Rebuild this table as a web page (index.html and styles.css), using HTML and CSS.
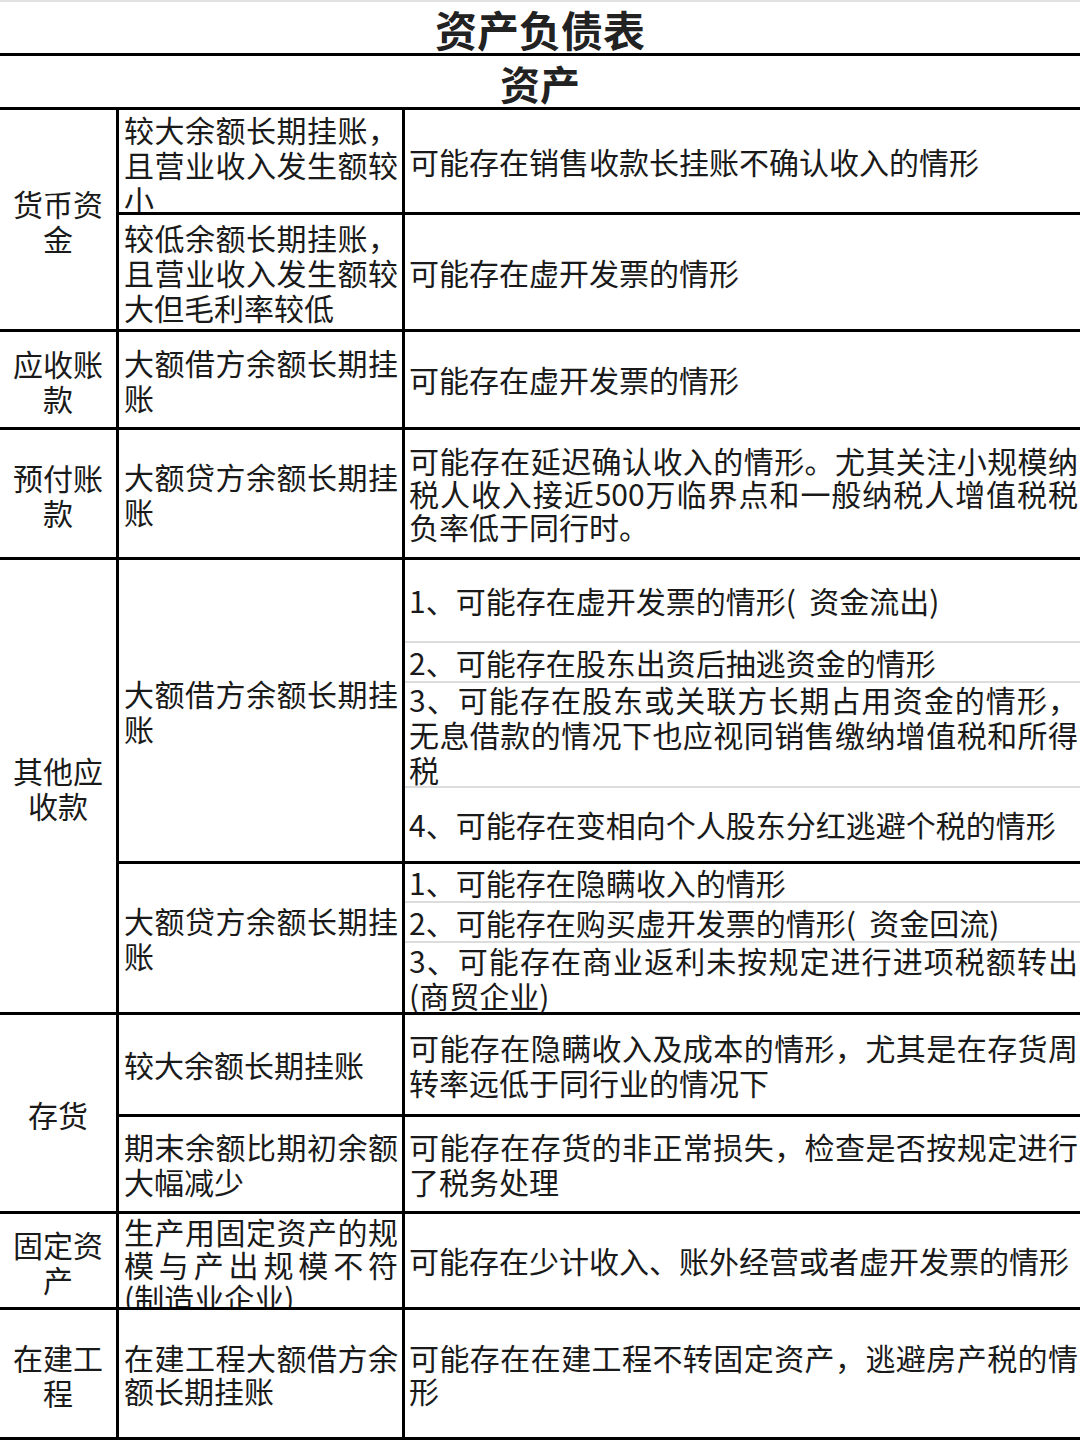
FILE: index.html
```html
<!DOCTYPE html>
<html lang="zh-CN">
<head>
<meta charset="utf-8">
<title>资产负债表</title>
<link rel="stylesheet" href="styles.css">
</head>
<body>
<div class="sheet">
  <div class="title">资产负债表</div>
  <div class="section">资产</div>
  <div class="grid">
    <div class="cell c1 span2"><p>货币资金</p></div>
    <div class="cell c2 top1"><p>较大余额长期挂账，且营业收入发生额较小</p></div>
    <div class="cell c3"><p>可能存在销售收款长挂账不确认收入的情形</p></div>
    <div class="cell c2"><p>较低余额长期挂账，且营业收入发生额较大但毛利率较低</p></div>
    <div class="cell c3"><p>可能存在虚开发票的情形</p></div>

    <div class="cell c1"><p>应收账款</p></div>
    <div class="cell c2"><p>大额借方余额长期挂账</p></div>
    <div class="cell c3"><p>可能存在虚开发票的情形</p></div>

    <div class="cell c1"><p>预付账款</p></div>
    <div class="cell c2"><p>大额贷方余额长期挂账</p></div>
    <div class="cell c3 tight"><p>可能存在延迟确认收入的情形。尤其关注小规模纳税人收入接近500万临界点和一般纳税人增值税税负率低于同行时。</p></div>

    <div class="cell c1 span2"><p>其他应收款</p></div>
    <div class="cell c2"><p>大额借方余额长期挂账</p></div>
    <div class="split split-a">
      <div class="cell c3"><p>1、可能存在虚开发票的情形(&nbsp; 资金流出)</p></div>
      <div class="cell c3"><p>2、可能存在股东出资后抽逃资金的情形</p></div>
      <div class="cell c3"><p>3、可能存在股东或关联方长期占用资金的情形，无息借款的情况下也应视同销售缴纳增值税和所得税</p></div>
      <div class="cell c3"><p>4、可能存在变相向个人股东分红逃避个税的情形</p></div>
    </div>
    <div class="cell c2"><p>大额贷方余额长期挂账</p></div>
    <div class="split split-b">
      <div class="cell c3"><p>1、可能存在隐瞒收入的情形</p></div>
      <div class="cell c3"><p>2、可能存在购买虚开发票的情形(&nbsp; 资金回流)</p></div>
      <div class="cell c3"><p>3、可能存在商业返利未按规定进行进项税额转出(商贸企业)</p></div>
    </div>

    <div class="cell c1 span2"><p>存货</p></div>
    <div class="cell c2"><p>较大余额长期挂账</p></div>
    <div class="cell c3"><p>可能存在隐瞒收入及成本的情形，尤其是在存货周转率远低于同行业的情况下</p></div>
    <div class="cell c2"><p>期末余额比期初余额大幅减少</p></div>
    <div class="cell c3"><p>可能存在存货的非正常损失，检查是否按规定进行了税务处理</p></div>

    <div class="cell c1"><p>固定资产</p></div>
    <div class="cell c2 top2 tight"><p>生产用固定资产的规模与产出规模不符(制造业企业)</p></div>
    <div class="cell c3"><p>可能存在少计收入、账外经营或者虚开发票的情形</p></div>

    <div class="cell c1"><p>在建工程</p></div>
    <div class="cell c2 tight"><p>在建工程大额借方余额长期挂账</p></div>
    <div class="cell c3 tight"><p>可能存在在建工程不转固定资产，逃避房产税的情形</p></div>
  </div>
</div>
</body>
</html>
```

FILE: styles.css
```css
html, body {
  margin: 0;
  padding: 0;
  background: #ffffff;
}

body {
  width: 1080px;
  font-family: "Noto Sans CJK SC", "Noto Sans", sans-serif;
  color: #1a1a1a;
}

.sheet {
  border-top: 2px solid #e2e2e2;
}

.title {
  height: 54px;
  padding-top: 2px;
  box-sizing: border-box;
  border-bottom: 3px solid #000;
  display: flex;
  align-items: center;
  justify-content: center;
  font-size: 42px;
  font-weight: 700;
  line-height: 1;
  color: #222;
}

.section {
  height: 49px;
  padding-top: 2px;
  border-bottom: 3px solid #000;
  display: flex;
  align-items: center;
  justify-content: center;
  font-size: 40px;
  font-weight: 700;
  line-height: 1;
  color: #222;
}

.grid {
  display: grid;
  grid-template-columns: 116px 283px 1fr;
  grid-template-rows: 102px 114px 95px 127px 301px 148px 99px 94px 93px 127px;
  gap: 3px;
  background: #000;
  border-bottom: 3px solid #000;
}

.cell {
  background: #fff;
  display: flex;
  align-items: center;
  overflow: hidden;
  font-size: 30px;
  line-height: 35px;
  box-sizing: border-box;
}

.cell p {
  margin: 0;
  width: 100%;
}

.tight {
  line-height: 33px;
}

.span2 {
  grid-row: span 2;
}

.c1 {
  padding: 0 6px;
  text-align: center;
}

.c1 p {
  padding-top: 3px;
}

.c2 {
  padding: 0 4px 0 5px;
  text-align: justify;
}

.c3 {
  padding: 0 2px 0 4px;
  text-align: justify;
}

.top1 {
  align-items: flex-start;
  padding-top: 2px;
}

.top2 {
  align-items: flex-start;
  padding-top: 1px;
}

.split {
  display: grid;
  row-gap: 2px;
  background: #dcdcdc;
}

.split-a {
  grid-template-rows: 81px 38px 103px 1fr;
}

.split-b {
  grid-template-rows: 37px 38px 1fr;
}
```
